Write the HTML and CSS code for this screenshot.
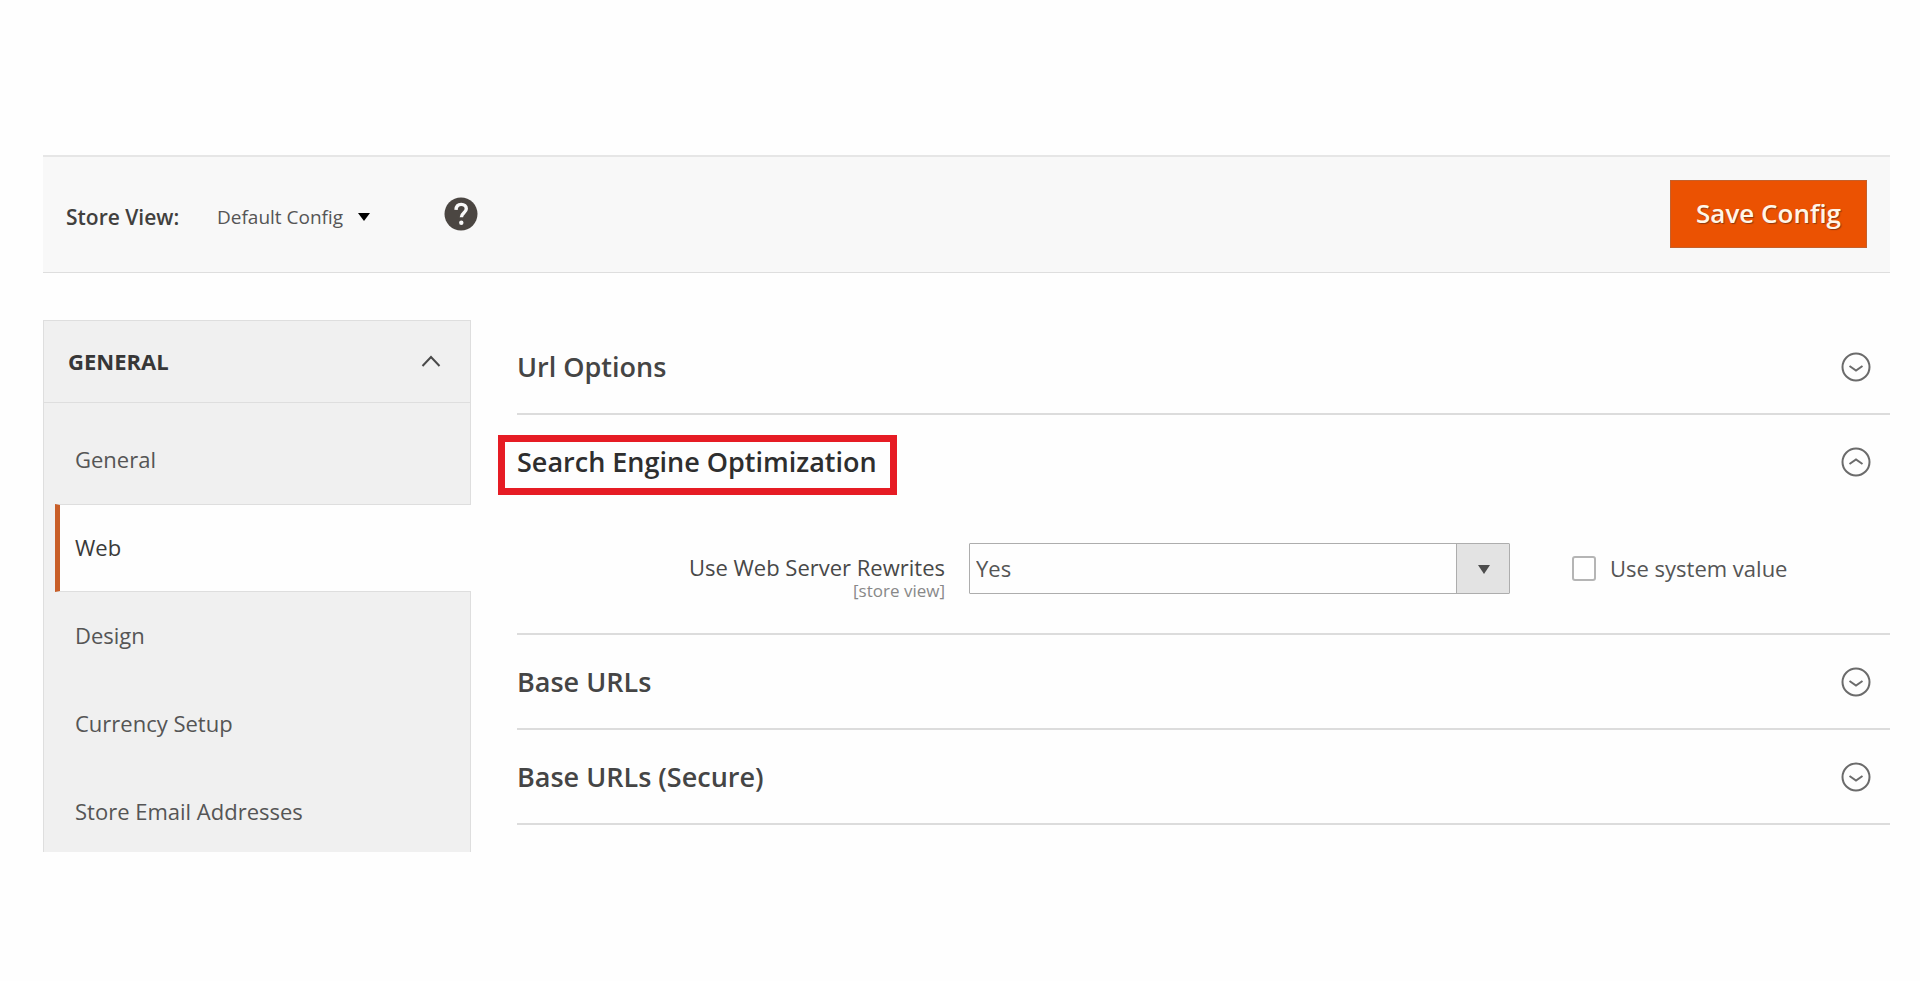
FILE: index.html
```html
<!DOCTYPE html>
<html lang="en">
<head>
<meta charset="utf-8">
<title>Configuration</title>
<link rel="stylesheet" href="styles.css">
</head>
<body>
<svg class="sprite" aria-hidden="true">
  <symbol id="circle-down" viewBox="0 0 30 30"><circle cx="15" cy="15" r="13.5"/><path d="M8.5 14l6.5 4.5 6.5-4.5"/></symbol>
  <symbol id="circle-up" viewBox="0 0 30 30"><circle cx="15" cy="15" r="13.5"/><path d="M8.5 17l6.5-4.5 6.5 4.5"/></symbol>
</svg>
<div class="page">
  <header class="toolbar">
    <span class="toolbar-label" id="store-label">Store View:</span>
    <button class="store-switch" type="button" aria-describedby="store-label">Default Config
      <svg class="caret" viewBox="0 0 12 8" aria-hidden="true"><path d="M0 0h12L6 8z"/></svg>
    </button>
    <a class="help" href="#" aria-label="Help">
      <svg viewBox="0 0 34 34" aria-hidden="true"><circle cx="17" cy="17" r="16.5" fill="#4b4642"/><path d="M12 12.8C12.2 9 14.300 7.400 17.200 7.400c3 0 5.100 1.700 5.100 4.400 0 3.900-4.900 4-4.900 8.400" fill="none" stroke="#f8f8f8" stroke-width="3.400"/><circle cx="17.300" cy="25.800" r="2.200" fill="#f8f8f8"/></svg>
    </a>
    <button class="save" type="button">Save Config</button>
  </header>

  <div class="columns">
    <nav class="sidebar">
      <button class="sidebar-title" type="button" aria-expanded="true">GENERAL
        <svg class="chevron" viewBox="0 0 20 12" aria-hidden="true"><path d="M1.500 11L10 2l8.500 9"/></svg>
      </button>
      <ul class="sidebar-list">
        <li><a class="item" href="#">General</a></li>
        <li><a class="item active" href="#" aria-current="page">Web</a></li>
        <li><a class="item" href="#">Design</a></li>
        <li><a class="item" href="#">Currency Setup</a></li>
        <li><a class="item last" href="#">Store Email Addresses</a></li>
      </ul>
    </nav>

    <main class="sections">
      <section class="section">
        <h2><button class="section-toggle" type="button" aria-expanded="false"><span>Url Options</span><svg class="state" aria-hidden="true"><use href="#circle-down"/></svg></button></h2>
      </section>
      <section class="section open">
        <h2><button class="section-toggle" type="button" aria-expanded="true"><span class="marked">Search Engine Optimization</span><svg class="state" aria-hidden="true"><use href="#circle-up"/></svg></button></h2>
        <div class="field">
          <label class="field-label" for="rewrites">Use Web Server Rewrites<span class="scope">[store view]</span></label>
          <div class="select-wrap">
            <select id="rewrites" class="select"><option>Yes</option><option>No</option></select>
            <svg class="select-arrow" viewBox="0 0 12 9" aria-hidden="true"><path d="M0 0h12L6 9z"/></svg>
          </div>
          <label class="check"><input type="checkbox"><span>Use system value</span></label>
        </div>
      </section>
      <section class="section">
        <h2><button class="section-toggle" type="button" aria-expanded="false"><span>Base URLs</span><svg class="state" aria-hidden="true"><use href="#circle-down"/></svg></button></h2>
      </section>
      <section class="section">
        <h2><button class="section-toggle" type="button" aria-expanded="false"><span>Base URLs (Secure)</span><svg class="state" aria-hidden="true"><use href="#circle-down"/></svg></button></h2>
      </section>
    </main>
  </div>
</div>
</body>
</html>
```
FILE: styles.css
```css
* { box-sizing: border-box; }
body {
  margin: 0;
  background: #fefefe;
  color: #555;
  font: 22px/30px "Open Sans", "Noto Sans", sans-serif;
}
button, select, input { font: inherit; color: inherit; margin: 0; }
button { border: 0; background: none; padding: 0; cursor: pointer; text-align: left; }
a { color: inherit; text-decoration: none; }
.sprite { display: none; }
.page { padding: 155px 30px 0 43px; }

.toolbar {
  display: flex;
  align-items: center;
  padding: 23px 23px 24px;
  background: #f8f8f8;
  border-top: 2px solid #e6e6e6;
  border-bottom: 1px solid #dedede;
}
.toolbar-label { width: 151px; padding-top: 6px; font-size: 21px; font-weight: 600; color: #41403e; }
.store-switch { display: flex; align-items: center; gap: 15px; padding-top: 6px; font-size: 19px; }
.caret { width: 12px; height: 8px; fill: #000; }
.help { margin-left: 74px; line-height: 0; }
.help svg { width: 34px; height: 34px; }
.save {
  margin-left: auto;
  padding: 15px 25px 17px;
  background: #eb5202;
  border: 1px solid #c4602c;
  color: #fff6e8;
  font-size: 26px;
  font-weight: 600;
  line-height: 34px;
  text-shadow: 1px 1px 1px #8c3a10;
}

.columns { display: flex; gap: 46px; padding-top: 47px; }
.sidebar {
  flex: 0 0 428px;
  align-self: flex-start;
  background: #f0f0f0;
  border: 1px solid #dedede;
  border-bottom: 0;
}
.sidebar-title {
  display: flex;
  justify-content: space-between;
  align-items: center;
  width: 100%;
  padding: 25px 29px 26px 24px;
  border-bottom: 1px solid #dedede;
  color: #373737;
  font-weight: 700;
}
.chevron { width: 20px; height: 12px; fill: none; stroke: #4a4a4a; stroke-width: 2; }
.sidebar-list { list-style: none; margin: 0; padding: 13px 0 0; }
.item {
  display: block;
  margin: 0 -1px 0 11px;
  padding: 27px 15px 29px;
  border: 1px solid transparent;
  border-width: 1px 0 1px 5px;
}
.item.active {
  background: #fefefe;
  border-color: #dedede;
  border-left-color: #c85e28;
  color: #3a3a3a;
  font-weight: 500;
}
.item.last { padding-bottom: 25px; }

.sections { flex: 1; min-width: 0; }
.section { border-bottom: 2px solid #dcdcdc; }
.section h2 { margin: 0; font: inherit; }
.section-toggle {
  display: flex;
  justify-content: space-between;
  align-items: center;
  width: 100%;
  padding: 31px 19px 30px 0;
  font-size: 27px;
  font-weight: 600;
  line-height: 32px;
  color: #454545;
}
.open .section-toggle { color: #2e2e2e; }
.state { width: 30px; height: 30px; fill: none; stroke: #6b6b6b; stroke-width: 2; }
.marked { position: relative; }
.marked::after {
  content: "";
  position: absolute;
  inset: -11px -20px -17px -19px;
  border: 7px solid #e61c24;
}

.field {
  display: grid;
  grid-template-columns: 428px 541px 1fr;
  column-gap: 24px;
  padding: 35px 0 32px;
}
.field-label { text-align: right; font-weight: 500; line-height: 28px; padding-top: 10px; color: #484848; }
.scope { display: block; font-size: 17px; font-weight: 400; line-height: 20px; color: #888; }
.select-wrap { position: relative; height: 51px; }
.select {
  appearance: none;
  width: 100%;
  height: 100%;
  padding: 0 60px 2px 6px;
  border: 1px solid #adadad;
  border-radius: 1px;
  background: linear-gradient(#adadad, #adadad) right 52px top / 1px 100% no-repeat,
    linear-gradient(#e3e3e3, #e3e3e3) right top / 52px 100% no-repeat, #fefefe;
}
.select-arrow { position: absolute; right: 20px; top: 22px; width: 12px; height: 9px; fill: #4d4d4d; pointer-events: none; }
.check { display: flex; align-items: center; gap: 14px; height: 51px; padding-left: 38px; }
.check span { padding-bottom: 2px; }
.check input {
  appearance: none;
  width: 24px;
  height: 25px;
  border: 2px solid #b5b5b5;
  border-radius: 3px;
  background: #fff;
}
```
